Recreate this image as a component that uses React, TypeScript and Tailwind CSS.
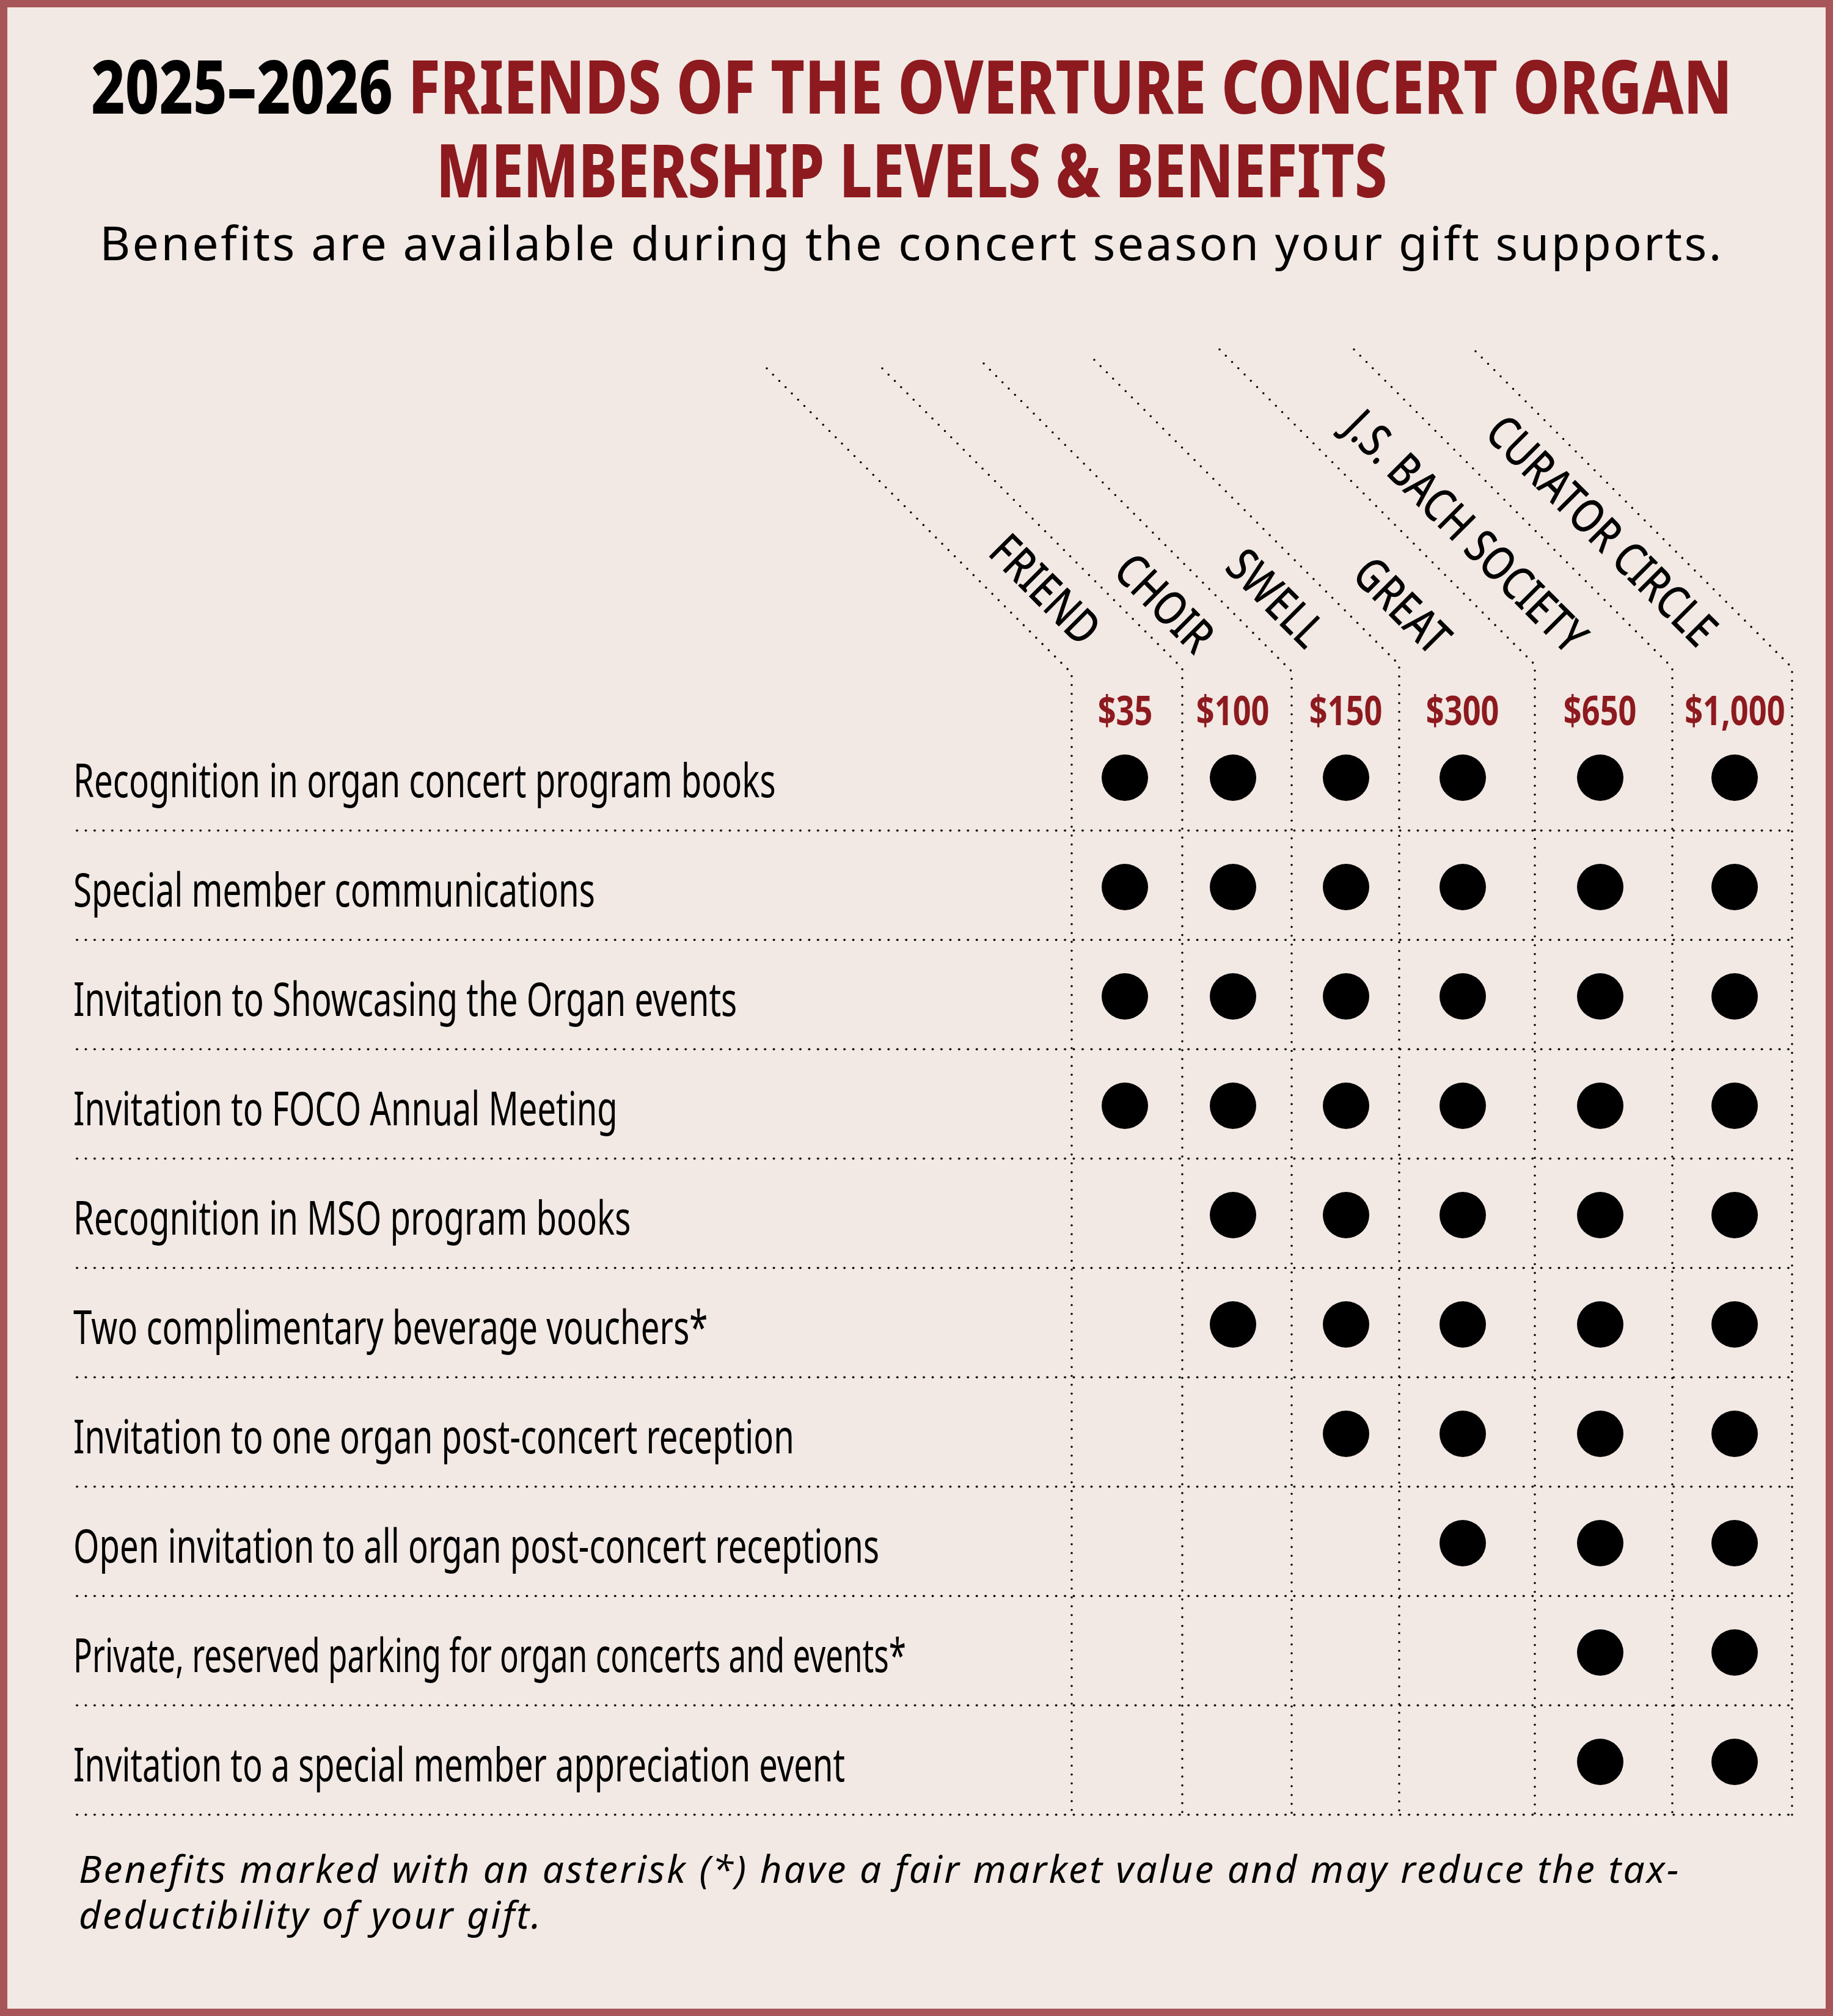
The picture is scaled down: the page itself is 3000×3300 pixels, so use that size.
import React from "react";

type Level = { name: string; price: string; pos: string; shift: string };

const levels: Level[] = [
  { name: "FRIEND", price: "$35", pos: "left-[1757px] top-[625px]", shift: "mr-[7px]" },
  { name: "CHOIR", price: "$100", pos: "left-[1943px] top-[638px]", shift: "mr-[13px]" },
  { name: "SWELL", price: "$150", pos: "left-[2124px] top-[629px]", shift: "ml-[2px]" },
  { name: "GREAT", price: "$300", pos: "left-[2330px] top-[640px]", shift: "mr-[14px]" },
  { name: "J.S. BACH SOCIETY", price: "$650", pos: "left-[2553px] top-[638px]", shift: "mr-[11px]" },
  { name: "CURATOR CIRCLE", price: "$1,000", pos: "left-[2766px] top-[627px]", shift: "ml-[8px]" },
];

const lines: { xt: number; yt: number; xv: number }[] = [
  { xt: 1255, yt: 603, xv: 1754 },
  { xt: 1444, yt: 603, xv: 1935 },
  { xt: 1610, yt: 595, xv: 2114 },
  { xt: 1791, yt: 589, xv: 2290 },
  { xt: 1996, yt: 572, xv: 2512 },
  { xt: 2216, yt: 572, xv: 2737 },
  { xt: 2415, yt: 575, xv: 2933 },
];

const rows: { label: string; from: number; fit: string }[] = [
  { label: "Recognition in organ concert program books", from: 0, fit: "scale-x-[0.709]" },
  { label: "Special member communications", from: 0, fit: "scale-x-[0.709]" },
  { label: "Invitation to Showcasing the Organ events", from: 0, fit: "scale-x-[0.709]" },
  { label: "Invitation to FOCO Annual Meeting", from: 0, fit: "scale-x-[0.706]" },
  { label: "Recognition in MSO program books", from: 1, fit: "scale-x-[0.709]" },
  { label: "Two complimentary beverage vouchers*", from: 1, fit: "scale-x-[0.709]" },
  { label: "Invitation to one organ post-concert reception", from: 2, fit: "scale-x-[0.706]" },
  { label: "Open invitation to all organ post-concert receptions", from: 3, fit: "scale-x-[0.707]" },
  { label: "Private, reserved parking for organ concerts and events*", from: 4, fit: "scale-x-[0.664]" },
  { label: "Invitation to a special member appreciation event", from: 4, fit: "scale-x-[0.704]" },
];

const gridCols = "grid grid-cols-[1634px_181px_179px_176px_222px_225px_196px]";

export default function App() {
  return (
    <div className="w-[3000px] h-[3300px] border-[12px] border-[#a8555a] bg-[#f2e8e4] font-['Noto_Sans',sans-serif] text-black flex flex-col overflow-hidden">
      <header className="h-[424px] flex flex-col items-center pt-[59px] pr-[16px]">
        <h1 className="w-full text-[122px] leading-[137px] font-extrabold">
          <div className="flex justify-center">
            <div className="whitespace-nowrap scale-x-[0.79]">
              <span>2025–2026 </span>
              <span className="text-[#8c1a1f]">FRIENDS OF THE OVERTURE CONCERT ORGAN</span>
            </div>
          </div>
          <div className="flex justify-center">
            <div className="whitespace-nowrap scale-x-[0.775] text-[#8c1a1f]">
              MEMBERSHIP LEVELS &amp; BENEFITS
            </div>
          </div>
        </h1>
        <p className="mt-[13px] text-[77px] leading-[77px] tracking-[0.044em] whitespace-nowrap">
          Benefits are available during the concert season your gift supports.
        </p>
      </header>

      <section className="relative h-[2537px]">
        <svg
          className="absolute left-0 top-0 pointer-events-none"
          width={2976}
          height={2537}
          viewBox="12 436 2976 2537"
        >
          {lines.map((l, i) => {
            const yc = l.yt + (l.xv - l.xt);
            return (
              <path
                key={i}
                d={`M ${l.xt} ${l.yt} L ${l.xv} ${yc} L ${l.xv} 2982`}
                fill="none"
                stroke="#000"
                strokeWidth={3.6}
                strokeLinecap="round"
                strokeDasharray="0 14.5"
              />
            );
          })}
        </svg>

        {levels.map((lv) => (
          <div key={lv.name} className={`absolute w-0 h-0 ${lv.pos}`}>
            <span className="absolute right-0 top-[-68px] origin-[100%_68px] rotate-45 scale-x-[0.79] whitespace-nowrap text-[77px] leading-[77px] font-medium">
              {lv.name}
            </span>
          </div>
        ))}

        <div className="h-[657px]" />

        <div className="ml-[108px] w-[2813px]">
          <div className={`${gridCols} h-[90px]`}>
            <div />
            {levels.map((lv) => (
              <div key={lv.price} className="flex justify-center pt-[35px]">
                <div
                  className={`${lv.shift} scale-x-[0.78] text-[67px] leading-[67px] font-bold text-[#8c1a1f] whitespace-nowrap`}
                >
                  {lv.price}
                </div>
              </div>
            ))}
          </div>

          {rows.map((r) => (
            <div
              key={r.label}
              className={`${gridCols} h-[179px] bg-[radial-gradient(circle,#000_1.7px,transparent_2.2px)] bg-size-[14.45px_5px] bg-repeat-x bg-bottom`}
            >
              <div className="pt-[54px] text-[77px] leading-[77px] font-normal whitespace-nowrap">
                <div className={`origin-left ${r.fit}`}>{r.label}</div>
              </div>
              {levels.map((lv, ci) => (
                <div key={lv.name} className="flex items-center justify-center">
                  {ci >= r.from ? (
                    <div className={`${lv.shift} w-[76px] h-[76px] rounded-full bg-black`} />
                  ) : null}
                </div>
              ))}
            </div>
          ))}
        </div>
      </section>

      <footer className="mt-[48px] pl-[117px] text-[62px] leading-[75px] italic tracking-[0.052em]">
        <div className="whitespace-nowrap">
          Benefits marked with an asterisk (*) have a fair market value and may reduce the tax-
        </div>
        <div className="whitespace-nowrap">deductibility of your gift.</div>
      </footer>
    </div>
  );
}
